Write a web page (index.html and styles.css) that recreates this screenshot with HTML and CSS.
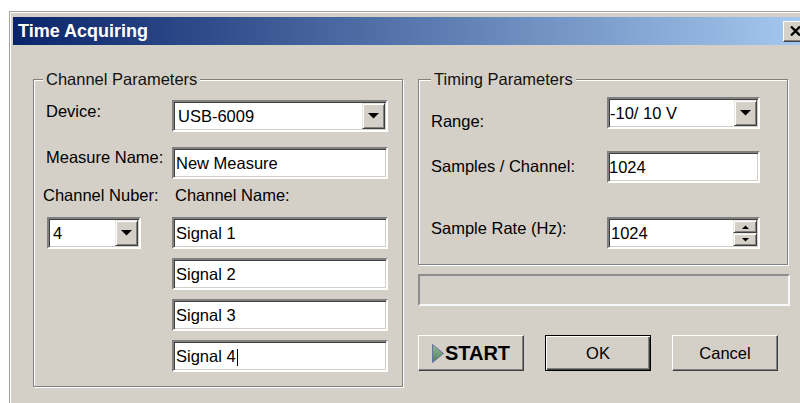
FILE: index.html
```html
<!DOCTYPE html>
<html lang="en">
<head>
<meta charset="utf-8">
<title>Time Acquiring</title>
<link rel="stylesheet" href="styles.css">
</head>
<body>
<div class="window">
  <div class="titlebar">
    <span class="title">Time Acquiring</span>
    <button class="close" type="button" aria-label="Close">
      <svg width="11" height="10" viewBox="0 0 11 10"><path d="M1 0.5 L10 9.5 M10 0.5 L1 9.5" stroke="#000" stroke-width="2.3"/></svg>
    </button>
  </div>

  <div class="client">
    <section class="group group-channel">
      <span class="caption">Channel Parameters</span>

      <div class="row row-device">
        <span class="lbl col-label lbl-device">Device:</span>
        <div class="combo w-wide">
          <span class="val">USB-6009</span>
          <span class="drop"><svg width="11" height="6" viewBox="0 0 11 6"><polygon points="0,0 11,0 5.5,5.5" fill="#000"/></svg></span>
        </div>
      </div>

      <div class="row row-measure">
        <span class="lbl col-label">Measure Name:</span>
        <div class="field w-wide">New Measure</div>
      </div>

      <div class="row row-heads">
        <span class="lbl col-label lbl-number">Channel Nuber:</span>
        <span class="lbl lbl-name">Channel Name:</span>
      </div>

      <div class="row row-signals">
        <div class="col-label">
          <div class="combo w-count">
            <span class="val">4</span>
            <span class="drop"><svg width="11" height="6" viewBox="0 0 11 6"><polygon points="0,0 11,0 5.5,5.5" fill="#000"/></svg></span>
          </div>
        </div>
        <div class="stack">
          <div class="field w-wide">Signal 1</div>
          <div class="field w-wide">Signal 2</div>
          <div class="field w-wide">Signal 3</div>
          <div class="field w-wide">Signal 4<span class="caret"></span></div>
        </div>
      </div>
    </section>

    <div class="side">
      <section class="group group-timing">
        <span class="caption caption-timing">Timing Parameters</span>

        <div class="row">
          <span class="lbl col-label-r lbl-range">Range:</span>
          <div class="combo w-narrow">
            <span class="val val-tight">-10/ 10 V</span>
            <span class="drop"><svg width="11" height="6" viewBox="0 0 11 6"><polygon points="0,0 11,0 5.5,5.5" fill="#000"/></svg></span>
          </div>
        </div>

        <div class="row row-samples">
          <span class="lbl col-label-r lbl-samples">Samples / Channel:</span>
          <div class="field field-tight w-narrow">1024</div>
        </div>

        <div class="row row-rate">
          <span class="lbl col-label-r lbl-rate">Sample Rate (Hz):</span>
          <div class="combo w-narrow">
            <span class="val val-spin">1024</span>
            <span class="spin">
              <span class="spin-btn"><svg width="7" height="4" viewBox="0 0 7 4"><polygon points="0,4 7,4 3.5,0.5" fill="#000"/></svg></span>
              <span class="spin-btn"><svg width="7" height="4" viewBox="0 0 7 4"><polygon points="0,0 7,0 3.5,3.5" fill="#000"/></svg></span>
            </span>
          </div>
        </div>
      </section>

      <div class="status"></div>

      <div class="actions">
        <button class="btn btn-start" type="button">
          <svg width="12" height="19" viewBox="0 0 12 19">
            <defs>
              <linearGradient id="playFill" x1="0" y1="0" x2="0" y2="1">
                <stop offset="0" stop-color="#93bf93"/>
                <stop offset="1" stop-color="#4e7d5e"/>
              </linearGradient>
            </defs>
            <polygon points="0.5,0.5 11.5,9.5 0.5,18.5" fill="url(#playFill)" stroke="#6a6fa8" stroke-width="1"/>
          </svg>
          <span>START</span>
        </button>
        <button class="btn btn-default" type="button">OK</button>
        <button class="btn" type="button">Cancel</button>
      </div>
    </div>
  </div>
</div>
</body>
</html>
```

FILE: styles.css
```css
* {
  box-sizing: border-box;
}

html,
body {
  margin: 0;
}

body {
  background: #fff;
  height: 403px;
  overflow: hidden;
  font-family: "Liberation Sans", Arial, sans-serif;
  font-size: 16.5px;
  color: #000;
}

/* dialog frame */
.window {
  margin: 11px 0 0 9px;
  width: 791px;
  height: 392px;
  overflow: hidden;
  background: #d4d0c8;
  border-top: 1px solid #a0a0a0;
  border-left: 1px solid #a0a0a0;
  box-shadow: inset 1px 1px 0 #fff;
  padding: 5px 0 0 3px;
}

.titlebar {
  display: flex;
  align-items: center;
  justify-content: space-between;
  width: 798px;
  height: 28px;
  padding: 0 4px 0 5px;
  background: linear-gradient(to right, #0a246a, #a6caf0);
}

.title {
  color: #fff;
  font-weight: bold;
  font-size: 18px;
  line-height: 28px;
  white-space: nowrap;
}

.close {
  width: 24px;
  height: 21px;
  padding: 0;
  display: flex;
  align-items: center;
  justify-content: center;
  background: #d4d0c8;
  border: 1px solid;
  border-color: #fff #404040 #404040 #fff;
  box-shadow: inset -1px -1px 0 #808080;
}

.client {
  display: flex;
  gap: 15px;
  padding: 34px 0 0 20px;
}

/* etched group boxes */
.group {
  position: relative;
  border: 1px solid #808080;
  box-shadow: inset 1px 1px 0 #fff, 1px 1px 0 #fff;
}

.caption {
  position: absolute;
  top: -10px;
  left: 9px;
  padding: 0 3px;
  line-height: 18px;
  background: #d4d0c8;
  color: #111;
  white-space: nowrap;
}

.caption-timing {
  left: 12px;
}

.group-channel {
  flex: none;
  width: 370px;
  height: 308px;
  padding: 20px 0 0 12px;
}

.group-timing {
  width: 370px;
  height: 186px;
  padding: 17px 0 0 12px;
}

.row {
  display: flex;
  align-items: flex-start;
}

.lbl {
  line-height: 20px;
  white-space: nowrap;
}

.col-label {
  width: 126px;
  flex: none;
}

.col-label-r {
  width: 176px;
  flex: none;
}

.lbl-device {
  margin-top: 1px;
}

.row-measure {
  margin-top: 15px;
}

.row-heads {
  margin-top: 6px;
}

.lbl-number {
  margin-left: -3px;
  width: 129px;
}

.lbl-name {
  padding-left: 3px;
}

.row-signals {
  margin-top: 12px;
}

.stack {
  display: flex;
  flex-direction: column;
  gap: 9px;
}

.lbl-range {
  margin-top: 14px;
}

.row-samples {
  margin-top: 20px;
}

.lbl-samples {
  margin-top: 5px;
}

.row-rate {
  margin-top: 34px;
}

.lbl-rate {
  margin-top: 1px;
}

/* sunken edit controls */
.field,
.combo {
  height: 32px;
  background: #fff;
  border: 2px solid;
  border-color: #808080 #fff #fff #808080;
  box-shadow: inset 1px 1px 0 #404040, inset -1px -1px 0 #d4d0c8;
  white-space: nowrap;
}

.field {
  line-height: 28px;
  padding: 0 2px;
}

.field-tight {
  padding: 0;
}

.combo {
  display: flex;
  padding: 1px;
}

.w-wide {
  width: 216px;
}

.w-narrow {
  width: 153px;
}

.w-count {
  width: 94px;
  margin-left: 1px;
}

.val {
  flex: 1;
  line-height: 26px;
  padding-left: 3px;
  overflow: hidden;
}

.val-tight {
  padding-left: 0;
}

.val-spin {
  padding-left: 1px;
}

.drop {
  width: 23px;
  flex: none;
  display: flex;
  align-items: center;
  justify-content: center;
  background: #d4d0c8;
  border: 1px solid;
  border-color: #e8e6e0 #404040 #404040 #e8e6e0;
  box-shadow: inset 1px 1px 0 #fff, inset -1px -1px 0 #808080;
}

.spin {
  width: 24px;
  flex: none;
  display: flex;
  flex-direction: column;
}

.spin-btn {
  flex: 1;
  display: flex;
  align-items: center;
  justify-content: center;
  background: #d4d0c8;
  border: 1px solid;
  border-color: #e8e6e0 #404040 #404040 #e8e6e0;
  box-shadow: inset 1px 1px 0 #fff, inset -1px -1px 0 #808080;
}

.caret {
  display: inline-block;
  width: 1px;
  height: 17px;
  margin-left: 1px;
  background: #000;
  vertical-align: -4px;
}

.side {
  flex: none;
  width: 372px;
}

.status {
  margin-top: 9px;
  width: 372px;
  height: 32px;
  border: 2px solid;
  border-color: #8c8c8c #f8f8f8 #f8f8f8 #8c8c8c;
}

/* command buttons */
.actions {
  display: flex;
  gap: 21px;
  margin-top: 29px;
}

.btn {
  width: 106px;
  height: 36px;
  padding: 0;
  display: flex;
  align-items: center;
  justify-content: center;
  font: inherit;
  color: #000;
  background: #d4d0c8;
  border: 1px solid;
  border-color: #fff #404040 #404040 #fff;
  box-shadow: inset -1px -1px 0 #808080;
}

.btn-start {
  gap: 1px;
  font-weight: bold;
  font-size: 20px;
}

.btn-default {
  border-color: #000;
  box-shadow: inset 1px 1px 0 #fff, inset -1px -1px 0 #404040, inset -2px -2px 0 #808080;
}
```
